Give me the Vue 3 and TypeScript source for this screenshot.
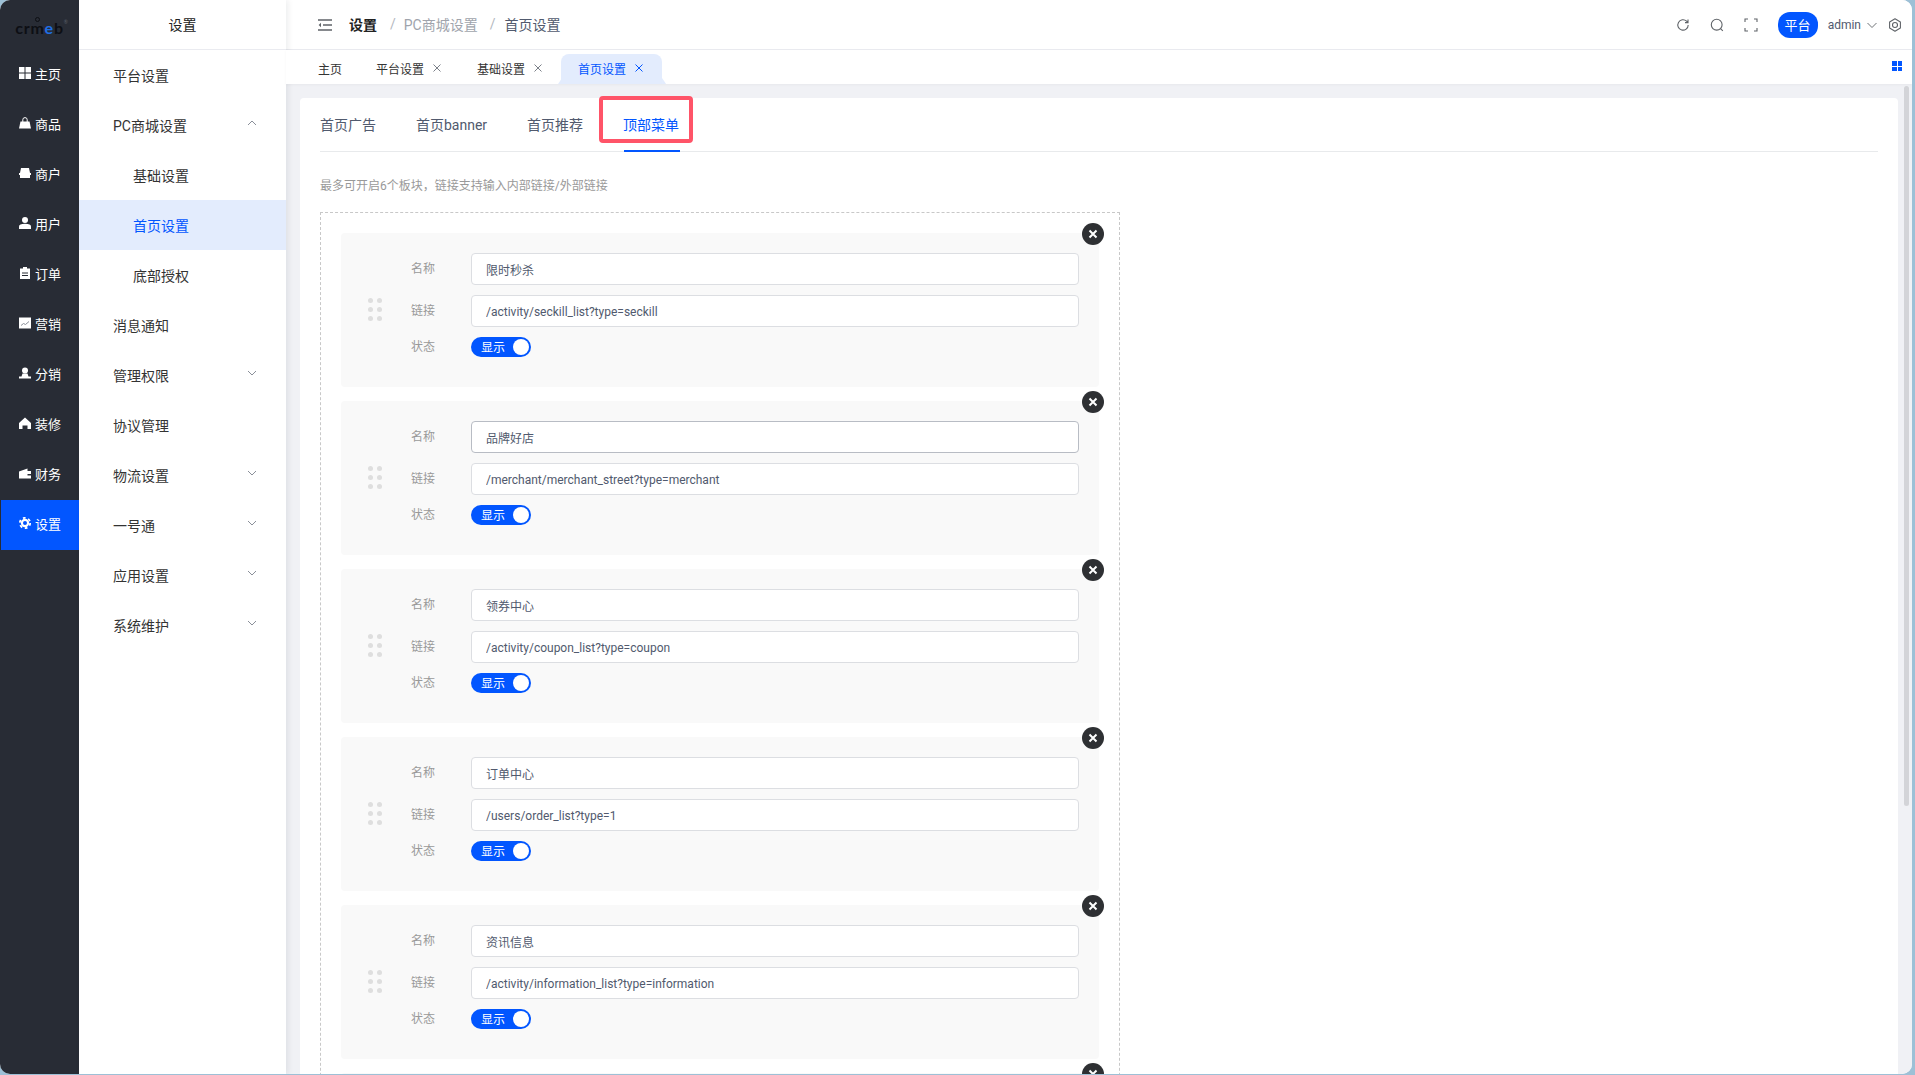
<template>
  <div class="shell">
    <aside class="rail">
      <div class="logo">
        <span>cr</span><span class="logo__m">m</span><span class="logo__e">e</span><span>b</span><sup class="logo__mark">®</sup>
      </div>
      <div
        v-for="item in railItems"
        :key="item.label"
        class="rail__item"
        :class="{ 'rail__item--active': item.label === '设置' }"
      >
        <svg class="rail__icon" viewBox="0 0 12 12" fill="#fff" v-html="item.icon"></svg>
        <span>{{ item.label }}</span>
      </div>
    </aside>

    <nav class="side">
      <div class="side__title"><span>设置</span></div>
      <div
        v-for="item in sideItems"
        :key="item.label"
        class="side__item"
        :class="{ 'side__item--sub': item.sub, 'side__item--active': item.active }"
      >
        <span>{{ item.label }}</span>
        <svg v-if="item.arrow" class="side__arrow" viewBox="0 0 12 12" fill="none" stroke="#8a8f99" stroke-width="1">
          <path :d="item.arrow === 'up' ? 'M2 8l4-4 4 4' : 'M2 4l4 4 4-4'" />
        </svg>
      </div>
    </nav>

    <div class="main">
      <header class="top">
        <svg class="top__burger" viewBox="0 0 14 12" fill="none" stroke="#5f6368" stroke-width="1.6">
          <path d="M0 1h14M5 6h9M0 11h14" />
          <path d="M3 3.800L.6 6 3 8.200z" fill="#5f6368" stroke="none" />
        </svg>
        <div class="crumbs">
          <strong>设置</strong>
          <i class="crumbs__sep crumbs__sep--first">/</i>
          <span class="crumbs__mid">PC商城设置</span>
          <i class="crumbs__sep crumbs__sep--second">/</i>
          <span>首页设置</span>
        </div>
        <div class="top__right">
          <svg class="top__icon" viewBox="0 0 14 14" fill="none" stroke="#5f6368" stroke-width="1.1">
            <path d="M12.200 7a5.200 5.200 0 1 1-1.600-3.800L12 4.600M12 1.600v3h-3" />
          </svg>
          <svg class="top__icon" viewBox="0 0 14 14" fill="none" stroke="#5f6368" stroke-width="1.1">
            <circle cx="6.700" cy="6.700" r="5.400" /><path d="M10.600 10.600l2.200 2.200" />
          </svg>
          <svg class="top__icon" viewBox="0 0 14 14" fill="none" stroke="#5f6368" stroke-width="1.1">
            <path d="M1 4V1h3M10 1h3v3M13 10v3h-3M4 13H1v-3" />
          </svg>
          <span class="top__badge">平台</span>
          <span class="top__user">admin</span>
          <svg class="top__chevron" viewBox="0 0 10 10" fill="none" stroke="#5f6368" stroke-width="0.9">
            <path d="M.5 3l4.500 4.500L9.500 3" />
          </svg>
          <svg class="top__gear" viewBox="0 0 14 14" fill="none" stroke="#5f6368" stroke-width="1.1">
            <path d="M7 .8l5.400 3.100v6.200L7 13.200 1.600 10.100V3.900z" stroke-linejoin="round" />
            <circle cx="7" cy="7" r="2.500" />
          </svg>
        </div>
      </header>

      <div class="tabs">
        <div
          v-for="tab in pageTabs"
          :key="tab.label"
          class="tab"
          :class="{ 'tab--active': tab.active }"
        >
          <span>{{ tab.label }}</span>
          <svg v-if="tab.close" class="tab__close" viewBox="0 0 10 10" fill="none" stroke="currentColor" stroke-width="1">
            <path d="M1.500 1.500l7 7M8.500 1.500l-7 7" />
          </svg>
        </div>
        <div class="tabs__grid"><b></b><b></b><b></b><b></b></div>
      </div>

      <div class="content">
        <section class="card">
          <div class="subtabs">
            <div
              v-for="tab in subTabs"
              :key="tab"
              class="subtab"
              :class="{ 'subtab--active': tab === '顶部菜单' }"
            >
              {{ tab }}
            </div>
            <div class="subtabs__mark"></div>
          </div>
          <p class="tip">最多可开启6个板块，链接支持输入内部链接/外部链接</p>

          <div class="board">
            <div v-for="row in menuRows" :key="row.name" class="entry">
              <div class="entry__dots"><b v-for="n in 6" :key="n"></b></div>
              <div class="entry__form">
                <div class="field">
                  <label>名称</label>
                  <input :class="{ hovered: row.name === '品牌好店' }" :value="row.name" readonly />
                </div>
                <div class="field">
                  <label>链接</label>
                  <input class="field__link" :value="row.link" readonly />
                </div>
                <div class="field field--switch">
                  <label>状态</label>
                  <div class="switch"><span>显示</span><i></i></div>
                </div>
              </div>
              <div class="entry__close">
                <svg viewBox="0 0 10 10" fill="none" stroke="#fff" stroke-width="2">
                  <path d="M1.500 1.500l7 7M8.500 1.500l-7 7" />
                </svg>
              </div>
            </div>
            <!-- next row starts under the fold, only its close button shows -->
            <div class="entry">
              <div class="entry__close">
                <svg viewBox="0 0 10 10" fill="none" stroke="#fff" stroke-width="2">
                  <path d="M1.500 1.500l7 7M8.500 1.500l-7 7" />
                </svg>
              </div>
            </div>
          </div>
        </section>
        <div class="thumb"></div>
      </div>
    </div>
  </div>
</template>

<script setup lang="ts">
interface RailItem {
  label: string
  icon: string
}

interface SideItem {
  label: string
  sub?: boolean
  active?: boolean
  arrow?: 'up' | 'down'
}

interface PageTab {
  label: string
  close?: boolean
  active?: boolean
}

const railItems: RailItem[] = [
  { label: '主页', icon: '<path d="M0 0h5.500v5.500H0zM6.500 0H12v5.500H6.500zM0 6.500h5.500V12H0zM6.500 6.500H12V12H6.500z"/>' },
  { label: '商品', icon: '<path d="M1.500 4.500h9L12 11.500H0z"/><path d="M3.800 5V2.800a2.200 2.200 0 0 1 4.400 0V5" fill="none" stroke="#fff"/>' },
  { label: '商户', icon: '<path d="M2 1h8l1 5v5H1V6z"/><path d="M0 6h12v2H0z"/>' },
  { label: '用户', icon: '<circle cx="6" cy="3" r="3"/><path d="M0 12V9.500C0 7.800 2 6.800 6 6.800s6 1 6 2.700V12z"/>' },
  { label: '订单', icon: '<path d="M1 1.500h10V12H1z"/><path d="M4 0h4v2.500H4z"/><path d="M3 6h6M3 8.500h6" stroke="#282c35"/>' },
  { label: '营销', icon: '<path d="M0 .5h12v11H0z"/><path d="M2 8.500l2.500-2 2 1 3.500-3" stroke="#8a8f99" fill="none"/>' },
  { label: '分销', icon: '<circle cx="6" cy="3.500" r="3"/><path d="M3.500 6.500h5l1 3H12v2H0v-2h2.500z"/>' },
  { label: '装修', icon: '<path d="M6 .5l6 5.500v6H8.500V8.500h-5V12H0V6z"/>' },
  { label: '财务', icon: '<path d="M0 4.500l8.500-3V4H12v7.500H0z"/><path d="M8.500 7h3.500v1.500H8.500z" fill="#282c35"/>' },
  { label: '设置', icon: '<circle cx="6" cy="6" r="4.200"/><circle cx="6" cy="6" r="5.200" fill="none" stroke="#fff" stroke-width="1.800" stroke-dasharray="2.720 2.720"/><circle cx="6" cy="6" r="2" fill="#0256ff"/>' }
]

const sideItems: SideItem[] = [
  { label: '平台设置' },
  { label: 'PC商城设置', arrow: 'up' },
  { label: '基础设置', sub: true },
  { label: '首页设置', sub: true, active: true },
  { label: '底部授权', sub: true },
  { label: '消息通知' },
  { label: '管理权限', arrow: 'down' },
  { label: '协议管理' },
  { label: '物流设置', arrow: 'down' },
  { label: '一号通', arrow: 'down' },
  { label: '应用设置', arrow: 'down' },
  { label: '系统维护', arrow: 'down' }
]

const pageTabs: PageTab[] = [
  { label: '主页' },
  { label: '平台设置', close: true },
  { label: '基础设置', close: true },
  { label: '首页设置', close: true, active: true }
]

const subTabs = ['首页广告', '首页banner', '首页推荐', '顶部菜单']

const menuRows = [
  { name: '限时秒杀', link: '/activity/seckill_list?type=seckill' },
  { name: '品牌好店', link: '/merchant/merchant_street?type=merchant' },
  { name: '领券中心', link: '/activity/coupon_list?type=coupon' },
  { name: '订单中心', link: '/users/order_list?type=1' },
  { name: '资讯信息', link: '/activity/information_list?type=information' }
]
</script>

<style>
html,
body {
  margin: 0;
  height: 100%;
  overflow: hidden;
  background: #9dc0d6;
}
</style>

<style scoped>
.shell {
  width: 1912px;
  height: 1074px;
  display: flex;
  overflow: hidden;
  border-radius: 10px;
  background: #fff;
  font-family: Roboto, 'Noto Sans CJK SC', sans-serif;
  font-size: 14px;
  color: #333;
}

.rail {
  width: 79px;
  flex: none;
  background: #282c35;
  color: #fff;
  font-size: 13px;
}

.logo {
  height: 50px;
  display: flex;
  align-items: center;
  justify-content: center;
  padding-top: 5px;
  box-sizing: border-box;
  font-family: Lato, sans-serif;
  font-size: 16px;
  font-weight: 700;
  letter-spacing: 0.8px;
  color: #0d0f14;
}

.logo__m {
  position: relative;
}

.logo__m::before {
  content: '';
  position: absolute;
  left: 5px;
  top: -1px;
  width: 5px;
  height: 5px;
  box-sizing: border-box;
  border: 1.500px solid #0d0f14;
  border-radius: 50%;
}

.logo__e {
  color: #1f6fe5;
}

.logo__mark {
  width: 0;
  margin: -12px 0 0;
  font-size: 5px;
  font-weight: 400;
  color: #5a5f69;
}

.rail__item {
  height: 50px;
  margin-left: 1px;
  display: flex;
  align-items: center;
  padding-left: 18px;
  gap: 4px;
}

.rail__item span {
  margin-top: -4px;
}

.rail__item--active {
  background: #0256ff;
}

.rail__icon {
  width: 12px;
  height: 12px;
  flex: none;
  margin-top: -4px;
}

.side {
  width: 207px;
  flex: none;
  background: #fff;
  box-shadow: 2px 0 6px rgba(0, 21, 41, 0.08);
  position: relative;
  z-index: 1;
}

.side__title {
  height: 49px;
  border-bottom: 1px solid #eaebf0;
  display: flex;
  align-items: center;
  justify-content: center;
  color: #222;
}

.side__title span {
  margin-top: -2px;
}

.side__item {
  height: 50px;
  display: flex;
  align-items: center;
  justify-content: space-between;
  padding: 0 28px 0 34px;
  color: #333;
}

.side__item--sub {
  padding-left: 54px;
}

.side__item--active {
  background: #e3ecfd;
  color: #0256ff;
}

.side__arrow {
  width: 12px;
  height: 12px;
  margin-top: -4px;
}

.main {
  flex: 1;
  min-width: 0;
  display: flex;
  flex-direction: column;
  background: #f0f1f5;
}

.top {
  height: 49px;
  flex: none;
  background: #fff;
  border-bottom: 1px solid #eaebf0;
  display: flex;
  align-items: center;
  padding: 0 10px 0 32px;
}

.top__burger {
  width: 14px;
  height: 12px;
  margin-right: 17px;
}

.crumbs {
  display: flex;
  align-items: center;
  margin-top: -2px;
  color: #515a6e;
}

.crumbs strong {
  color: #222;
  font-weight: 700;
}

.crumbs__sep {
  font-style: normal;
  color: #b4b8c0;
}

.crumbs__sep--first {
  margin: 0 8px 0 13px;
}

.crumbs__sep--second {
  margin: 0 9px 0 12px;
}

.crumbs__mid {
  color: #a0a4ac;
}

.top__right {
  margin-left: auto;
  display: flex;
  align-items: center;
  color: #515a6e;
}

.top__icon {
  width: 14px;
  height: 14px;
  margin-right: 20px;
}

.top__badge {
  width: 40px;
  height: 26px;
  border-radius: 12px;
  background: #0256ff;
  color: #fff;
  font-size: 13px;
  display: flex;
  align-items: center;
  justify-content: center;
}

.top__user {
  font-size: 12px;
  margin-left: 10px;
}

.top__chevron {
  width: 10px;
  height: 10px;
  margin-left: 6px;
}

.top__gear {
  width: 14px;
  height: 14px;
  margin-left: 11px;
}

.tabs {
  height: 34px;
  flex: none;
  background: #fff;
  display: flex;
  align-items: flex-end;
  padding-left: 15px;
  font-size: 12px;
  position: relative;
  box-shadow: 0 1px 3px rgba(0, 0, 0, 0.04);
  z-index: 1;
}

.tab {
  height: 30px;
  padding: 0 18px 0 17px;
  display: flex;
  align-items: center;
  gap: 8px;
  color: #333;
  border-radius: 8px 8px 0 0;
  position: relative;
}

.tab:first-child {
  padding-right: 17px;
}

.tab span {
  margin-top: -2px;
}

.tab--active {
  background: #e3ecfd;
  color: #0256ff;
}

.tab--active::before,
.tab--active::after {
  content: '';
  position: absolute;
  bottom: 0;
  width: 4px;
  height: 6px;
  background: #e3ecfd;
}

.tab--active::before {
  left: -3px;
  clip-path: polygon(100% 0, 100% 100%, 0 100%);
}

.tab--active::after {
  right: -4px;
  clip-path: polygon(0 0, 100% 100%, 0 100%);
}

.tab__close {
  width: 10px;
  height: 10px;
  margin-top: -2px;
  color: #7b8088;
}

.tab--active .tab__close {
  color: #0256ff;
}

.tabs__grid {
  position: absolute;
  right: 10px;
  top: 11px;
  width: 10px;
  display: grid;
  grid-template-columns: 4.500px 4.500px;
  gap: 1px;
}

.tabs__grid b {
  height: 4.500px;
  background: #0256ff;
}

.content {
  flex: 1;
  min-height: 0;
  padding: 14px 14px 0;
  position: relative;
  overflow: hidden;
}

.card {
  height: 100%;
  background: #fff;
  border-radius: 4px 4px 0 0;
  padding: 0 20px;
  position: relative;
}

.subtabs {
  height: 54px;
  display: flex;
  align-items: center;
  gap: 40px;
  border-bottom: 1px solid #e8eaec;
  box-sizing: border-box;
  position: relative;
  color: #515a6e;
}

.subtab {
  margin-top: -2px;
}

.subtab--active {
  color: #0256ff;
}

.subtabs__mark {
  position: absolute;
  left: 304px;
  bottom: -1px;
  width: 56px;
  height: 2px;
  background: #0256ff;
}

.subtabs__mark::after {
  content: '';
  position: absolute;
  left: -25px;
  bottom: 9px;
  width: 86px;
  height: 39px;
  border: 4px solid #ff5468;
  border-radius: 4px;
}

.tip {
  margin: 25px 0 0;
  height: 18px;
  line-height: 18px;
  font-size: 12px;
  color: #999;
}

.board {
  width: 800px;
  box-sizing: border-box;
  margin-top: 17px;
  padding: 20px;
  border: 1px dashed #c8c8c8;
  border-bottom: 0;
}

.entry {
  height: 154px;
  margin-bottom: 14px;
  background: #f9f9f9;
  border-radius: 4px;
  display: flex;
  align-items: center;
  padding-left: 27px;
  position: relative;
}

.entry__dots {
  width: 14px;
  display: grid;
  grid-template-columns: 5px 5px;
  gap: 4px;
  margin-right: 29px;
  margin-top: -1px;
}

.entry__dots b {
  height: 5px;
  border-radius: 50%;
  background: #dedede;
}

.entry__form {
  align-self: flex-start;
  padding-top: 20px;
  display: flex;
  flex-direction: column;
  gap: 10px;
}

.field {
  display: flex;
  align-items: center;
  font-size: 12px;
}

.field label {
  width: 24px;
  margin: -4px 36px 0 0;
  color: #999;
}

.field input {
  width: 608px;
  height: 32px;
  box-sizing: border-box;
  padding: 0 14px;
  border: 1px solid #dcdee2;
  border-radius: 4px;
  background: #fff;
  color: #515a6e;
  font: inherit;
  outline: none;
}

.field input.field__link {
  padding-top: 2px;
}

.field input.hovered {
  border-color: #b8bcc4;
}

.field--switch {
  height: 20px;
}

.switch {
  width: 60px;
  height: 20px;
  box-sizing: border-box;
  padding: 0 2px 0 10px;
  border-radius: 10px;
  background: #0256ff;
  color: #fff;
  display: flex;
  align-items: center;
  justify-content: space-between;
}

.switch span {
  margin-top: -2px;
}

.switch i {
  width: 16px;
  height: 16px;
  border-radius: 50%;
  background: #fff;
}

.entry__close {
  position: absolute;
  top: -10px;
  right: -5px;
  width: 22px;
  height: 22px;
  border-radius: 50%;
  background: #2e3033;
  display: flex;
  align-items: center;
  justify-content: center;
}

.entry__close svg {
  width: 10px;
  height: 10px;
}

.thumb {
  position: absolute;
  top: 2px;
  right: 3px;
  width: 5px;
  height: 720px;
  border-radius: 3px;
  background: #d3d4d8;
}
</style>
